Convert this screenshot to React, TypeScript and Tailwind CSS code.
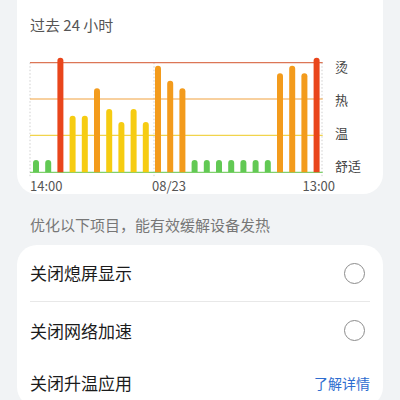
import React from 'react';

type Level = 'cool' | 'warm' | 'hot' | 'burn';

const barColors: Record<Level, string> = {
  cool: '#62c954',
  warm: '#f6cc12',
  hot: '#f39b1c',
  burn: '#e9451b',
};

// top of each bar in chart coordinates (baseline is 122.3)
const bars: { top: number; level: Level }[] = [
  { top: 110, level: 'cool' },
  { top: 110, level: 'cool' },
  { top: 7.7, level: 'burn' },
  { top: 65.7, level: 'warm' },
  { top: 65.7, level: 'warm' },
  { top: 38.3, level: 'hot' },
  { top: 59, level: 'warm' },
  { top: 72, level: 'warm' },
  { top: 59, level: 'warm' },
  { top: 72, level: 'warm' },
  { top: 15.7, level: 'hot' },
  { top: 30.7, level: 'hot' },
  { top: 38.3, level: 'hot' },
  { top: 110, level: 'cool' },
  { top: 110, level: 'cool' },
  { top: 110, level: 'cool' },
  { top: 110, level: 'cool' },
  { top: 110, level: 'cool' },
  { top: 110, level: 'cool' },
  { top: 110, level: 'cool' },
  { top: 23.3, level: 'hot' },
  { top: 15.7, level: 'hot' },
  { top: 23.3, level: 'hot' },
  { top: 7.7, level: 'burn' },
];

const BASE = 122.3;

const TempChart: React.FC = () => {
  return (
    <svg width="300" height="129" viewBox="0 0 300 129" className="block ml-[11px] shrink-0">
      {[2, 126, 294].map((x) => (
        <line key={x} x1={x} y1={12.7} x2={x} y2={128} stroke="#cfcfcf" strokeWidth="1" strokeDasharray="1.5 2" />
      ))}
      <line x1="2" y1="12.7" x2="294.7" y2="12.7" stroke="#dc7656" strokeWidth="1.2" />
      <line x1="2" y1="49" x2="294.7" y2="49" stroke="#f2a23e" strokeWidth="1.2" />
      <line x1="2" y1="85.3" x2="294.7" y2="85.3" stroke="#f1d44c" strokeWidth="1.2" />
      <line x1="2" y1={BASE} x2="294.7" y2={BASE} stroke="#7fd16c" strokeWidth="1.2" />
      {bars.map((b, i) => {
        const cx = 8 + i * 12.2;
        const r = 3;
        const d = `M${cx - r} ${BASE} V${b.top + r} A${r} ${r} 0 0 1 ${cx + r} ${b.top + r} V${BASE} Z`;
        return <path key={i} d={d} fill={barColors[b.level]} />;
      })}
    </svg>
  );
};

const Radio: React.FC = () => (
  <span className="mr-[5px] block w-[21px] h-[21px] rounded-full border-[1.5px] border-[#8c8c8c]" />
);

const Row: React.FC<{ label: string; h: string; children: React.ReactNode }> = ({ label, h, children }) => (
  <div className={`flex items-center justify-between ${h}`}>
    <span className="text-[17px] text-[#1b1b1b]">{label}</span>
    {children}
  </div>
);

export default function App() {
  return (
    <div
      className="w-[400px] h-[400px] overflow-hidden bg-[#f1f3f5] px-[17px]"
      style={{ fontFamily: '"Noto Sans CJK SC", "Noto Sans", sans-serif' }}
    >
      <div className="bg-white rounded-b-[20px] pt-[14px] pb-[1px]">
        <div className="pl-[13px] text-[15px] leading-[22px] text-[#555]">过去 24 小时</div>
        <div className="mt-[14px] flex">
          <TempChart />
          <div className="ml-[7px] pt-[9px] flex flex-col gap-[17px] text-[13px] leading-[16px] text-[#444]">
            <span>烫</span>
            <span>热</span>
            <span>温</span>
            <span>舒适</span>
          </div>
        </div>
        <div className="flex pl-[13px] pr-[48px] text-[13px] leading-[14px] text-[#555]">
          <span className="w-[122px]">14:00</span>
          <span>08/23</span>
          <span className="ml-auto">13:00</span>
        </div>
      </div>

      <div className="mt-[20px] pl-[13px] text-[15px] leading-[22px] text-[#777]">优化以下项目，能有效缓解设备发热</div>

      <div className="mt-[9px] bg-white rounded-[20px] px-[13px]">
        <Row label="关闭熄屏显示" h="h-[56px]">
          <Radio />
        </Row>
        <div className="h-px bg-[#e8e8e8]" />
        <Row label="关闭网络加速" h="h-[57px]">
          <Radio />
        </Row>
        <Row label="关闭升温应用" h="h-[48px]">
          <span className="text-[14px] text-[#2e6dd0]">了解详情</span>
        </Row>
      </div>
    </div>
  );
}
